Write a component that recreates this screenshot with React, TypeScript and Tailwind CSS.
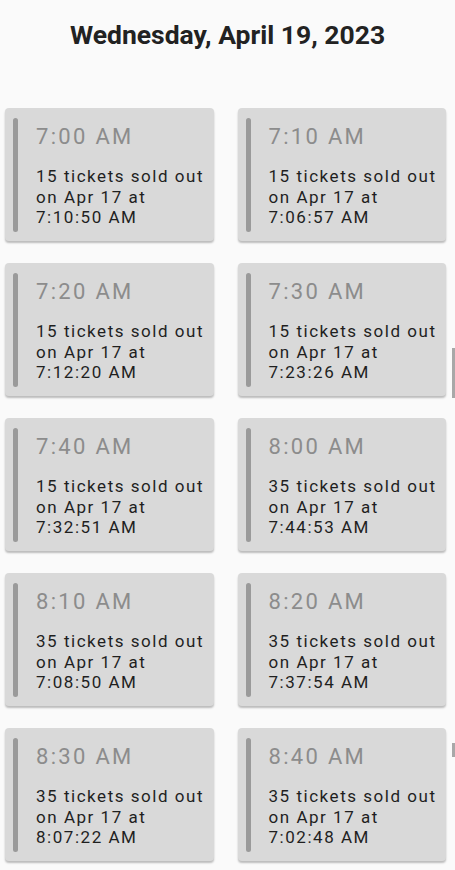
import React from 'react';

type Slot = { time: string; sold: number; at: string };

const slots: Slot[] = [
  { time: '7:00 AM', sold: 15, at: '7:10:50 AM' },
  { time: '7:10 AM', sold: 15, at: '7:06:57 AM' },
  { time: '7:20 AM', sold: 15, at: '7:12:20 AM' },
  { time: '7:30 AM', sold: 15, at: '7:23:26 AM' },
  { time: '7:40 AM', sold: 15, at: '7:32:51 AM' },
  { time: '8:00 AM', sold: 35, at: '7:44:53 AM' },
  { time: '8:10 AM', sold: 35, at: '7:08:50 AM' },
  { time: '8:20 AM', sold: 35, at: '7:37:54 AM' },
  { time: '8:30 AM', sold: 35, at: '8:07:22 AM' },
  { time: '8:40 AM', sold: 35, at: '7:02:48 AM' },
];

function SlotCard({ slot }: { slot: Slot }) {
  return (
    <div className="flex h-[133px] gap-[18px] rounded-[4px] bg-[#d9d9d9] pb-[9px] pl-[8px] pt-[10px] shadow-[0_2px_2px_rgba(0,0,0,0.25)]">
      <div className="w-[5px] shrink-0 rounded-full bg-[#9a9a9a]" />
      <div className="flex flex-col pt-[6px]">
        <div className="text-[22px] leading-[26px] tracking-[0.105em] text-[#8c8c8c]">{slot.time}</div>
        <div className="mt-[16px] text-[17px] leading-[20.5px] tracking-[0.09em] text-[#1f1f1f]">
          {slot.sold} tickets sold out
          <br />
          on Apr 17 at
          <br />
          {slot.at}
        </div>
      </div>
    </div>
  );
}

export default function App() {
  return (
    <main className="relative min-h-[870px] w-[455px] bg-[#fafafa] font-['Roboto',sans-serif]">
      <h1 className="pt-[19px] text-center text-[26.5px] font-bold leading-[32px] text-[#222]">
        Wednesday, April 19, 2023
      </h1>
      <div className="mt-[57px] grid grid-cols-2 gap-x-[24px] gap-y-[22px] pl-[5px] pr-[9px]">
        {slots.map((s) => (
          <SlotCard key={s.time} slot={s} />
        ))}
      </div>
      {/* scroll indicators along the right edge */}
      <div className="absolute right-0 top-[348px] h-[50px] w-[3px] bg-[#a8a8a8]" />
      <div className="absolute right-0 top-[743px] h-[14px] w-[3px] bg-[#a8a8a8]" />
    </main>
  );
}
